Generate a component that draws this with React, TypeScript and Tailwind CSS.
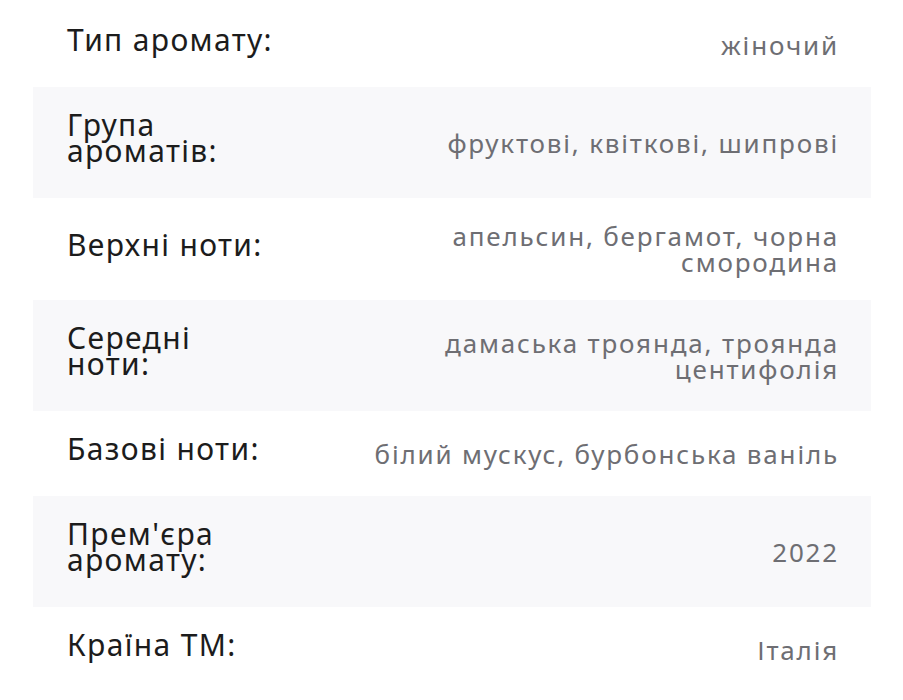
const rows: { label: string[]; value: string[] }[] = [
  { label: ["Тип аромату:"], value: ["жіночий"] },
  { label: ["Група", "ароматів:"], value: ["фруктові, квіткові, шипрові"] },
  { label: ["Верхні ноти:"], value: ["апельсин, бергамот, чорна", "смородина"] },
  { label: ["Середні", "ноти:"], value: ["дамаська троянда, троянда", "центифолія"] },
  { label: ["Базові ноти:"], value: ["білий мускус, бурбонська ваніль"] },
  { label: ["Прем'єра", "аромату:"], value: ["2022"] },
  { label: ["Країна ТМ:"], value: ["Італія"] },
];

export default function App() {
  return (
    <div className="min-h-screen bg-white font-['Noto_Sans',sans-serif]">
      <div className="mx-[33px] mt-[2px] w-[838px]">
        {rows.map((row, i) => (
          <div
            key={row.label.join(" ")}
            className={`flex items-center justify-between px-[34px] py-[25px] ${i % 2 === 1 ? "bg-[#f8f8fa]" : ""}`}
          >
            <div className="shrink-0 whitespace-nowrap pb-[9px] text-[30px] leading-[26px] tracking-[0.045em] text-[#1c1c1c]">
              {row.label.map((l) => (
                <div key={l}>{l}</div>
              ))}
            </div>
            <div className="-mr-[2px] whitespace-nowrap text-right text-[26px] leading-[26px] tracking-[0.07em] text-[#6e6e73]">
              {row.value.map((v) => (
                <div key={v}>{v}</div>
              ))}
            </div>
          </div>
        ))}
      </div>
    </div>
  );
}
